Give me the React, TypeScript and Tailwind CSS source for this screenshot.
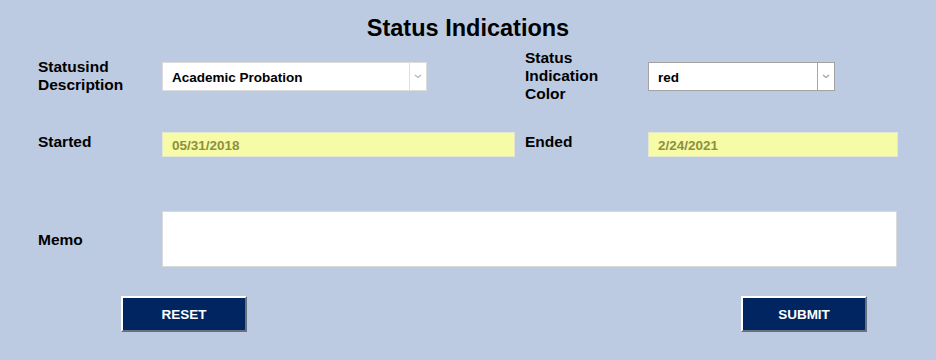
const Chevron = ({ color }: { color: string }) => {
    return (
        <svg width="8" height="5" viewBox="0 0 8 5" fill="none">
            <path d="M1 1 L4 3.5 L7 1" stroke={color} strokeWidth="1.2" />
        </svg>
    )
}

type SelectProps = {
    value: string
    width: string
    dark?: boolean
}

const FakeSelect = ({ value, width, dark }: SelectProps) => {
    return (
        <div className={`${width} h-[29px] flex bg-white border ${dark ? 'border-[#a3a3a3]' : 'border-[#dcdcdc]'}`}>
            <div className="flex-1 flex items-center pl-[9px] pt-[4px] text-[13.5px] font-bold text-black">{value}</div>
            <div className={`w-[17px] flex items-center justify-center border-l ${dark ? 'border-[#a8a8a8]' : 'border-[#dedede]'}`}>
                <Chevron color={dark ? '#a0a0a0' : '#b5b5b5'} />
            </div>
        </div>
    )
}

const DateBox = ({ value, width }: { value: string, width: string }) => {
    return (
        <div className={`${width} h-[25px] mt-[2px] flex items-center pl-[9px] pt-[3px] bg-[#f5fba6] border border-[#e4e7cf] text-[13.5px] font-bold text-[#8f8f3d]`}>
            {value}
        </div>
    )
}

const Label = ({ children, className = '' }: { children: React.ReactNode, className?: string }) => {
    return (
        <div className={`text-[15.5px] leading-[18px] font-bold text-black ${className}`}>{children}</div>
    )
}

const NavyButton = ({ children }: { children: string }) => {
    return (
        <button className="w-[126px] h-[36px] pt-[3px] bg-[#002561] text-white text-[13.5px] font-bold border-2 border-t-white border-l-white border-r-[#68707c] border-b-[#68707c]">
            {children}
        </button>
    )
}

const App = () => {
    return (
        <div className="w-[936px] h-[360px] bg-[#bdcbe2] font-['Liberation_Sans',Arial,sans-serif] overflow-hidden">
            <h1 className="pt-[14px] text-center text-[23.5px] leading-[28px] font-bold text-black">Status Indications</h1>

            <div className="mt-[6px] pl-[38px] grid grid-cols-[124px_363px_123px_250px] h-[56px] items-center">
                <Label>Statusind<br />Description</Label>
                <FakeSelect value="Academic Probation" width="w-[265px]" />
                <Label>Status<br />Indication<br />Color</Label>
                <FakeSelect value="red" width="w-[187px]" dark />
            </div>

            <div className="mt-[26px] pl-[38px] grid grid-cols-[124px_363px_123px_250px] items-start">
                <Label className="pt-[3px]">Started</Label>
                <DateBox value="05/31/2018" width="w-[353px]" />
                <Label className="pt-[3px]">Ended</Label>
                <DateBox value="2/24/2021" width="w-[250px]" />
            </div>

            <div className="mt-[54px] pl-[38px] flex items-center">
                <div className="w-[124px]">
                    <Label className="pt-[1px]">Memo</Label>
                </div>
                <div className="w-[735px] h-[56px] bg-white border border-[#dadada]"></div>
            </div>

            <div className="mt-[29px] pl-[121px] pr-[69px] flex justify-between">
                <NavyButton>RESET</NavyButton>
                <NavyButton>SUBMIT</NavyButton>
            </div>
        </div>
    )
}

export default App
